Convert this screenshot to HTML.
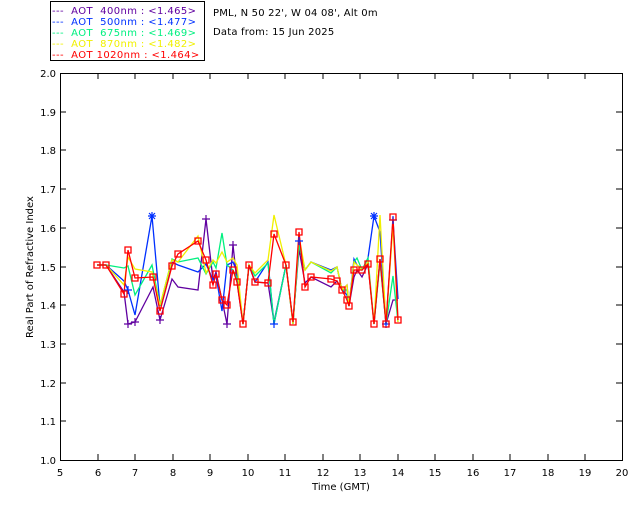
<!DOCTYPE html>
<html><head><style>
body{margin:0;background:#fff;width:640px;height:512px;overflow:hidden}
svg text{font-family:"DejaVu Sans","Liberation Sans",sans-serif;font-size:10px;white-space:pre}
</style></head><body>
<svg width="640" height="512" xmlns="http://www.w3.org/2000/svg">
<rect x="50.5" y="1.5" width="154" height="59" fill="#fff" stroke="#000"/>
<g font-size="10" letter-spacing="0.4">
<text x="52" y="14" fill="#6000a0">---  AOT  400nm : &lt;1.465&gt;</text>
<text x="52" y="25" fill="#0030ff">---  AOT  500nm : &lt;1.477&gt;</text>
<text x="52" y="36" fill="#00f080">---  AOT  675nm : &lt;1.469&gt;</text>
<text x="52" y="47" fill="#f0f000">---  AOT  870nm : &lt;1.482&gt;</text>
<text x="52" y="58" fill="#ff0000">---  AOT 1020nm : &lt;1.464&gt;</text>
</g>
<g letter-spacing="0.2">
<text x="213" y="16" fill="#000">PML, N 50 22', W 04 08', Alt 0m</text>
<text x="213" y="35" fill="#000">Data from: 15 Jun 2025</text>
</g>
<rect x="60.5" y="73.5" width="562" height="387" fill="none" stroke="#000"/>
<g stroke="#000">
<path d="M98 73v6M135 73v6M173 73v6M210 73v6M248 73v6M285 73v6M323 73v6M360 73v6M398 73v6M435 73v6M473 73v6M510 73v6M548 73v6M585 73v6M98 460v-6M135 460v-6M173 460v-6M210 460v-6M248 460v-6M285 460v-6M323 460v-6M360 460v-6M398 460v-6M435 460v-6M473 460v-6M510 460v-6M548 460v-6M585 460v-6"/>
<path d="M60 112h6M60 150h6M60 189h6M60 228h6M60 267h6M60 305h6M60 344h6M60 383h6M60 421h6M622 112h-6M622 150h-6M622 189h-6M622 228h-6M622 267h-6M622 305h-6M622 344h-6M622 383h-6M622 421h-6"/>
</g>
<g fill="#000" text-anchor="end">
<text x="56" y="77">2.0</text><text x="56" y="116">1.9</text><text x="56" y="154">1.8</text><text x="56" y="193">1.7</text><text x="56" y="232">1.6</text><text x="56" y="271">1.5</text><text x="56" y="309">1.4</text><text x="56" y="348">1.3</text><text x="56" y="387">1.2</text><text x="56" y="425">1.1</text><text x="56" y="464">1.0</text>
</g>
<g fill="#000" text-anchor="middle">
<text x="60" y="476">5</text><text x="98" y="476">6</text><text x="135" y="476">7</text><text x="173" y="476">8</text><text x="210" y="476">9</text><text x="248" y="476">10</text><text x="285" y="476">11</text><text x="323" y="476">12</text><text x="360" y="476">13</text><text x="398" y="476">14</text><text x="435" y="476">15</text><text x="473" y="476">16</text><text x="510" y="476">17</text><text x="548" y="476">18</text><text x="585" y="476">19</text><text x="622" y="476">20</text>
<text x="341" y="490">Time (GMT)</text>
<text transform="translate(33,267) rotate(-90)">Real Part of Refractive Index</text>
</g>
<g fill="none" stroke-width="1.3">
<polyline stroke="#6000a0" points="97,265 106,265 124,292 128,324 135,322 153,287 160,320 172,279 178,287 198,290 206,219 213,280 216,272 222,300 227,324 233,245 237,282 243,324 249,265 255,282 268,283 274,322 286,265 293,322 299,249 305,283 311,277 331,287 337,281 342,290 347,285 349,306 354,277 357,270 362,277 368,264 374,324 380,259 386,324 393,300 398,300"/>
<polyline stroke="#0030ff" points="97,265 106,265 124,281 128,290 135,315 152,216 160,306 172,262 178,265 198,272 206,264 213,280 216,276 222,311 227,265 233,262 237,272 243,324 249,265 255,282 268,262 274,324 286,265 293,324 299,241 305,270 311,262 331,270 337,267 342,290 347,295 349,306 354,259 357,265 362,270 368,258 374,216 380,232 386,324 393,220 398,299"/>
<polyline stroke="#00f080" points="97,265 106,265 124,268 128,266 135,295 152,265 160,306 172,259 178,262 198,258 206,274 213,262 216,268 222,233 227,265 233,270 237,278 243,324 249,265 255,276 268,263 274,324 286,265 293,324 299,245 305,270 311,262 331,273 337,267 342,290 347,290 349,306 354,262 357,258 362,270 368,258 374,324 380,262 386,324 393,276 398,322"/>
<polyline stroke="#f0f000" points="97,265 106,265 124,285 128,257 135,269 152,272 160,305 172,260 178,262 198,236 206,273 213,260 216,263 222,252 227,262 233,258 237,265 243,324 249,265 255,273 268,260 274,215 286,265 293,324 299,236 305,270 311,262 331,271 337,267 342,290 347,285 349,306 354,262 357,265 362,270 368,262 374,324 380,215 386,324 393,225 398,322"/>
<polyline stroke="#ff0000" points="97,265 106,265 124,294 128,250 135,278 153,277 160,311 172,266 178,254 198,241 206,260 213,285 216,274 222,300 227,305 233,270 237,282 243,324 249,265 255,282 268,283 274,234 286,265 293,322 299,232 305,287 311,277 331,279 337,281 342,290 347,300 349,306 354,270 357,270 362,270 368,264 374,324 380,259 386,324 393,217 398,320"/>
</g>
<g fill="none" stroke="#0030ff" stroke-width="1.2">
<path d="M152 212v8M148 216h8M149 213l6 6M155 213l-6 6M374 212v8M370 216h8M371 213l6 6M377 213l-6 6M274 320v8M270 324h8M386 320v8M382 324h8M299 237v8M295 241h8M393 216v8M389 220h8M128 286v8M124 290h8"/>
</g>
<g fill="none" stroke="#6000a0" stroke-width="1.2">
<path d="M206 215v8M202 219h8M128 320v8M124 324h8M135 318v8M131 322h8M160 316v8M156 320h8M227 320v8M223 324h8M233 241v8M229 245h8"/>
</g>
<g fill="none" stroke="#ff0000" stroke-width="1.3">
<path d="M94 262h6v6h-6zM103 262h6v6h-6zM121 291h6v6h-6zM125 247h6v6h-6zM132 275h6v6h-6zM150 274h6v6h-6zM157 308h6v6h-6zM169 263h6v6h-6zM175 251h6v6h-6zM195 238h6v6h-6zM203 257h6v6h-6zM210 282h6v6h-6zM213 271h6v6h-6zM219 297h6v6h-6zM224 302h6v6h-6zM230 267h6v6h-6zM234 279h6v6h-6zM240 321h6v6h-6zM246 262h6v6h-6zM252 279h6v6h-6zM265 280h6v6h-6zM271 231h6v6h-6zM283 262h6v6h-6zM290 319h6v6h-6zM296 229h6v6h-6zM302 284h6v6h-6zM308 274h6v6h-6zM328 276h6v6h-6zM334 278h6v6h-6zM339 287h6v6h-6zM344 297h6v6h-6zM346 303h6v6h-6zM351 267h6v6h-6zM359 267h6v6h-6zM365 261h6v6h-6zM371 321h6v6h-6zM377 256h6v6h-6zM383 321h6v6h-6zM390 214h6v6h-6zM395 317h6v6h-6z"/>
</g>
</svg>
</body></html>
